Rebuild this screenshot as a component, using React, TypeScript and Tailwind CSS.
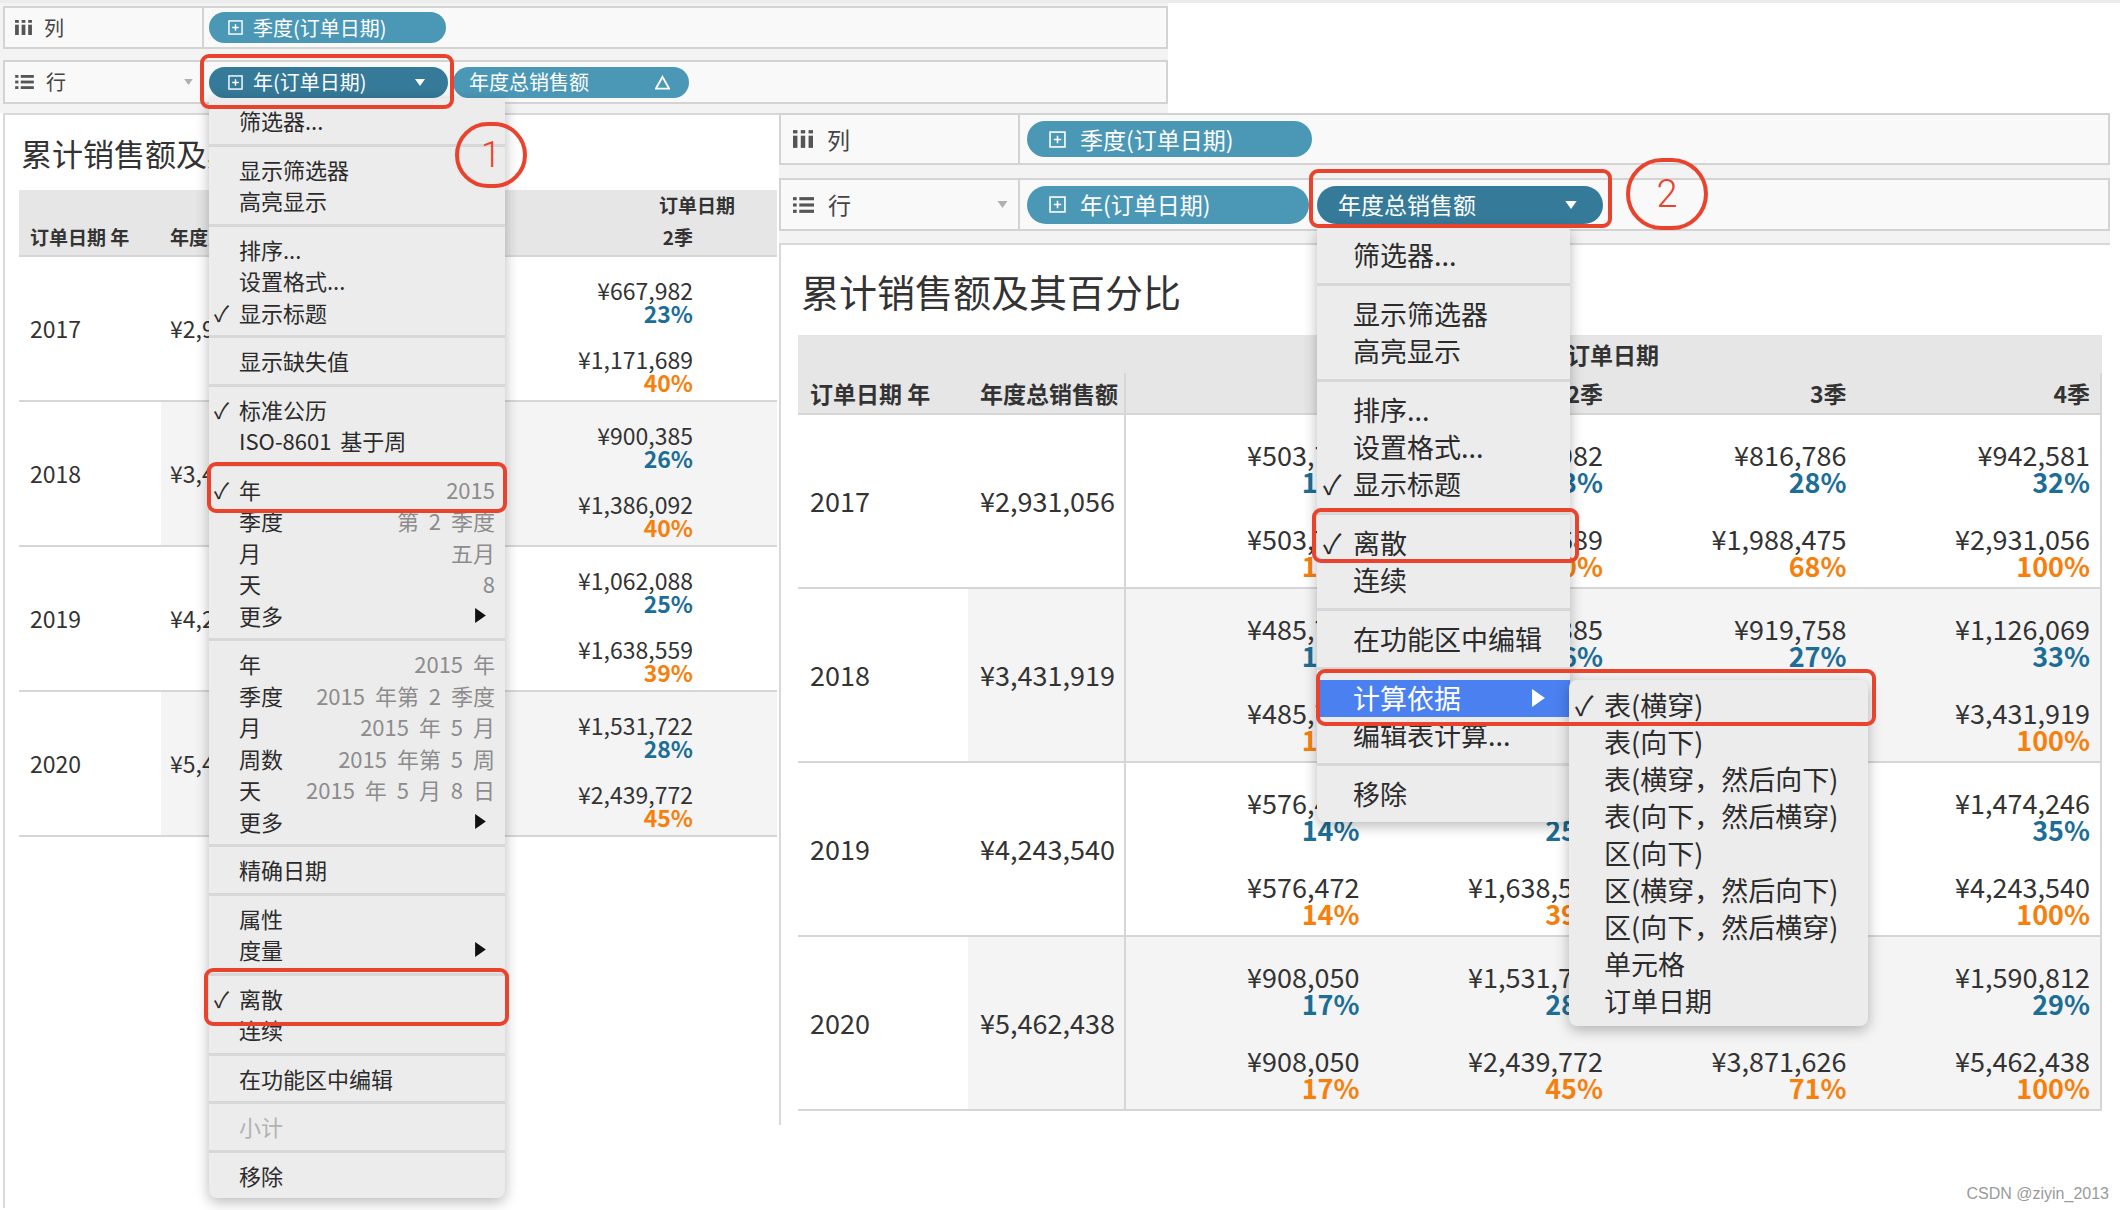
import React from "react";

const CJK = "font-['Noto_Sans_CJK_SC',sans-serif]";

type Item = {
  label: string;
  check?: boolean;
  value?: string;
  arrow?: boolean;
  disabled?: boolean;
  active?: boolean;
};

const menuOne: Item[][] = [
  [{ label: "筛选器..." }],
  [{ label: "显示筛选器" }, { label: "高亮显示" }],
  [{ label: "排序..." }, { label: "设置格式..." }, { label: "显示标题", check: true }],
  [{ label: "显示缺失值" }],
  [{ label: "标准公历", check: true }, { label: "ISO-8601 基于周" }],
  [
    { label: "年", check: true, value: "2015" },
    { label: "季度", value: "第 2 季度" },
    { label: "月", value: "五月" },
    { label: "天", value: "8" },
    { label: "更多", arrow: true },
  ],
  [
    { label: "年", value: "2015 年" },
    { label: "季度", value: "2015 年第 2 季度" },
    { label: "月", value: "2015 年 5 月" },
    { label: "周数", value: "2015 年第 5 周" },
    { label: "天", value: "2015 年 5 月 8 日" },
    { label: "更多", arrow: true },
  ],
  [{ label: "精确日期" }],
  [{ label: "属性" }, { label: "度量", arrow: true }],
  [{ label: "离散", check: true }, { label: "连续" }],
  [{ label: "在功能区中编辑" }],
  [{ label: "小计", disabled: true }],
  [{ label: "移除" }],
];

const menuTwo: Item[][] = [
  [{ label: "筛选器..." }],
  [{ label: "显示筛选器" }, { label: "高亮显示" }],
  [{ label: "排序..." }, { label: "设置格式..." }, { label: "显示标题", check: true }],
  [{ label: "离散", check: true }, { label: "连续" }],
  [{ label: "在功能区中编辑" }],
  [{ label: "计算依据", arrow: true, active: true }, { label: "编辑表计算..." }],
  [{ label: "移除" }],
];

const subMenu: Item[][] = [
  [
    { label: "表(横穿)", check: true },
    { label: "表(向下)" },
    { label: "表(横穿，然后向下)" },
    { label: "表(向下，然后横穿)" },
    { label: "区(向下)" },
    { label: "区(横穿，然后向下)" },
    { label: "区(向下，然后横穿)" },
    { label: "单元格" },
    { label: "订单日期" },
  ],
];

const rows = [
  {
    year: "2017",
    total: "¥2,931,056",
    cells: [
      ["¥503,707", "17%", "¥503,707", "17%"],
      ["¥667,982", "23%", "¥1,171,689", "40%"],
      ["¥816,786", "28%", "¥1,988,475", "68%"],
      ["¥942,581", "32%", "¥2,931,056", "100%"],
    ],
  },
  {
    year: "2018",
    total: "¥3,431,919",
    cells: [
      ["¥485,707", "14%", "¥485,707", "14%"],
      ["¥900,385", "26%", "¥1,386,092", "40%"],
      ["¥919,758", "27%", "¥2,305,850", "67%"],
      ["¥1,126,069", "33%", "¥3,431,919", "100%"],
    ],
  },
  {
    year: "2019",
    total: "¥4,243,540",
    cells: [
      ["¥576,472", "14%", "¥576,472", "14%"],
      ["¥1,062,088", "25%", "¥1,638,559", "39%"],
      ["¥1,130,735", "27%", "¥2,769,294", "65%"],
      ["¥1,474,246", "35%", "¥4,243,540", "100%"],
    ],
  },
  {
    year: "2020",
    total: "¥5,462,438",
    cells: [
      ["¥908,050", "17%", "¥908,050", "17%"],
      ["¥1,531,722", "28%", "¥2,439,772", "45%"],
      ["¥1,431,854", "26%", "¥3,871,626", "71%"],
      ["¥1,590,812", "29%", "¥5,462,438", "100%"],
    ],
  },
];

type TableCfg = {
  width: string;
  grid: string;
  data: string;
  quarters: number;
  headTop: string;
  headTopPos: string;
  headBot: string;
  headText: string;
  row: string;
  val: string;
  padL: string;
  padL2: string;
  padR: string;
  cell: string;
  line: string;
  gap: string;
};

// right sheet: all four quarters
const bigTable: TableCfg = {
  width: "w-[1304px]",
  grid: "grid-cols-[170px_156px_1fr]",
  data: "grid-cols-4 border-l-2 border-r-2",
  quarters: 4,
  headTop: "h-[38px]",
  headTopPos: "justify-center",
  headBot: "h-[40px]",
  headText: "text-[23px]",
  row: "h-[174px]",
  val: "text-[27px]",
  padL: "pl-[12px]",
  padL2: "pl-[12px]",
  padR: "pr-[10px]",
  cell: "pt-[26px] pr-[10px]",
  line: "text-[27px] leading-[27px]",
  gap: "mt-[30px]",
};

// left sheet: only the part left of the overlapping right sheet
const smallTable: TableCfg = {
  width: "w-[758px]",
  grid: "grid-cols-[142px_130px_1fr]",
  data: "grid-cols-[207px_207px_1fr] border-l-2",
  quarters: 2,
  headTop: "h-[30px]",
  headTopPos: "justify-end pr-[42px]",
  headBot: "h-[35px]",
  headText: "text-[19px]",
  row: "h-[145px]",
  val: "text-[23px]",
  padL: "pl-[11px]",
  padL2: "pl-[9px]",
  padR: "pr-[14px]",
  cell: "pt-[22px] pr-[14px]",
  line: "text-[23px] leading-[22.5px]",
  gap: "mt-[24px]",
};

function ColIcon({ className }: { className: string }) {
  return (
    <svg viewBox="0 0 18 16" className={className} fill="#555">
      <rect x="0" y="0" width="4" height="3" />
      <rect x="0" y="5" width="4" height="11" />
      <rect x="7" y="0" width="4" height="3" />
      <rect x="7" y="5" width="4" height="11" />
      <rect x="14" y="0" width="4" height="3" />
      <rect x="14" y="5" width="4" height="11" />
    </svg>
  );
}

function ListIcon({ className }: { className: string }) {
  return (
    <svg viewBox="0 0 20 15" className={className} fill="#555">
      <rect x="0" y="0" width="3.5" height="3" />
      <rect x="6" y="0" width="14" height="3" />
      <rect x="0" y="6" width="3.5" height="3" />
      <rect x="6" y="6" width="14" height="3" />
      <rect x="0" y="12" width="3.5" height="3" />
      <rect x="6" y="12" width="14" height="3" />
    </svg>
  );
}

function PlusBox({ className }: { className: string }) {
  return (
    <svg viewBox="0 0 16 16" className={className} fill="none" stroke="white" strokeWidth="1.5">
      <rect x="1" y="1" width="14" height="14" />
      <path d="M8 4.5v7M4.5 8h7" />
    </svg>
  );
}

function CaretDown({ className, color = "white" }: { className: string; color?: string }) {
  return (
    <svg viewBox="0 0 10 7" className={className}>
      <polygon points="0,0 10,0 5,7" fill={color} />
    </svg>
  );
}

function Delta({ className }: { className: string }) {
  return (
    <svg viewBox="0 0 16 16" className={className} fill="none" stroke="white" strokeWidth="2">
      <polygon points="8,2 15,14.5 1,14.5" />
    </svg>
  );
}

function ArrowRight({ className, color }: { className: string; color: string }) {
  return (
    <svg viewBox="0 0 10 14" className={className}>
      <polygon points="0,0 10,7 0,14" fill={color} />
    </svg>
  );
}

type MenuCfg = {
  box: string;
  text: string;
  item: string;
  sec: string;
  sep: string;
  pad: string;
  check: string;
  arrow: string;
};

function Menu({ sections, cfg }: { sections: Item[][]; cfg: MenuCfg }) {
  return (
    <div className={`absolute bg-[#ececec] shadow-[0_4px_14px_rgba(0,0,0,0.28)] text-[#2b2b2b] ${cfg.box} ${cfg.text}`}>
      {sections.map((sec, i) => (
        <div key={i}>
          {i > 0 && <div className={`bg-[#d7d7d7] ${cfg.sep}`} />}
          <div className={cfg.sec}>
            {sec.map((it, j) => (
              <div
                key={j}
                className={`relative flex items-center whitespace-nowrap ${cfg.item} ${cfg.pad} ${
                  it.active ? "bg-[#4a80f0] text-white" : ""
                } ${it.disabled ? "text-[#b2b2b2]" : ""}`}
              >
                {it.check && <span className={`absolute ${cfg.check}`}>✓</span>}
                <span className="[word-spacing:4px]">{it.label}</span>
                {it.value && <span className="ml-auto text-[#8c8c8c] [word-spacing:5px]">{it.value}</span>}
                {it.arrow && (
                  <ArrowRight className={`ml-auto ${cfg.arrow}`} color={it.active ? "white" : "#111"} />
                )}
              </div>
            ))}
          </div>
        </div>
      ))}
    </div>
  );
}

function Table({ c }: { c: TableCfg }) {
  const qs = ["1季", "2季", "3季", "4季"].slice(0, c.quarters);
  return (
    <div className={c.width}>
      <div className="bg-[#e6e6e6] border-b-2 border-[#d6d6d6] text-[#333]">
        <div className={`grid ${c.grid} ${c.headTop}`}>
          <div />
          <div />
          <div className={`flex items-center font-bold ${c.headText} ${c.headTopPos}`}>订单日期</div>
        </div>
        <div className={`grid ${c.grid} ${c.headBot}`}>
          <div className={`flex items-center font-bold whitespace-nowrap ${c.headText} ${c.padL}`}>订单日期 年</div>
          <div className={`flex items-center font-bold whitespace-nowrap ${c.headText} ${c.padL2}`}>年度总销售额</div>
          <div className={`grid border-[#d6d6d6] ${c.data}`}>
            {qs.map((q) => (
              <div key={q} className={`flex items-center justify-end font-bold ${c.headText} ${c.padR}`}>
                {q}
              </div>
            ))}
          </div>
        </div>
      </div>
      {rows.map((r, i) => (
        <div key={r.year} className={`grid ${c.grid} ${c.row} border-b-2 border-[#d6d6d6] text-[#333]`}>
          <div className={`flex items-center ${c.val} ${c.padL}`}>{r.year}</div>
          <div className={`flex items-center whitespace-nowrap ${c.val} ${c.padL2} ${i % 2 ? "bg-[#f4f4f4]" : ""}`}>
            {r.total}
          </div>
          <div className={`grid border-[#d6d6d6] ${c.data} ${i % 2 ? "bg-[#f4f4f4]" : ""}`}>
            {r.cells.slice(0, c.quarters).map((cell, j) => (
              <div key={j} className={`flex flex-col items-end whitespace-nowrap ${c.cell}`}>
                <span className={c.line}>{cell[0]}</span>
                <span className={`${c.line} font-bold text-[#1d6e96]`}>{cell[1]}</span>
                <span className={`${c.line} ${c.gap}`}>{cell[2]}</span>
                <span className={`${c.line} font-bold text-[#f7800d]`}>{cell[3]}</span>
              </div>
            ))}
          </div>
        </div>
      ))}
    </div>
  );
}

function RedBox({ className }: { className: string }) {
  return <div className={`absolute border-[4px] border-[#e9432d] rounded-[9px] ${className}`} />;
}

export default function App() {
  return (
    <div className={`relative w-[2120px] h-[1210px] overflow-hidden bg-white text-[#333] ${CJK}`}>
      <div className="h-[3px] bg-[#ebebeb]" />

      {/* left sheet */}
      <div className="w-[1168px] flex flex-col">
        <div className="bg-[#f3f3f3] pl-[3px] pt-[3px] pb-[9px]">
          <div className="h-[43px] flex border-2 border-[#d3d3d3] bg-[#f9f9f9]">
            <div className="w-[199px] flex items-center pl-[10px] gap-[12px] border-r-2 border-[#d3d3d3] text-[20px] text-[#444]">
              <ColIcon className="w-[17px] h-[15px]" />
              列
            </div>
            <div className="flex items-center pl-[5px]">
              <div className="w-[237px] h-[31px] rounded-full bg-[#4b98b6] text-white text-[20px] flex items-center pl-[19px] gap-[10px]">
                <PlusBox className="w-[15px] h-[15px]" />
                季度(订单日期)
              </div>
            </div>
          </div>
          <div className="h-[44px] mt-[11px] flex border-2 border-[#d3d3d3] bg-[#f9f9f9]">
            <div className="w-[199px] flex items-center pl-[10px] gap-[12px] border-r-2 border-[#d3d3d3] text-[20px] text-[#444]">
              <ListIcon className="w-[19px] h-[14px]" />
              行
              <CaretDown className="ml-auto mr-[9px] w-[9px] h-[6px]" color="#b0b0b0" />
            </div>
            <div className="flex items-center pl-[5px] gap-[5px]">
              <div className="w-[239px] h-[31px] rounded-full bg-[#357a98] text-white text-[20px] flex items-center pl-[19px] pr-[23px] gap-[10px]">
                <PlusBox className="w-[15px] h-[15px]" />
                年(订单日期)
                <CaretDown className="ml-auto w-[10px] h-[7px]" />
              </div>
              <div className="w-[236px] h-[31px] rounded-full bg-[#4b98b6] text-white text-[20px] flex items-center pl-[16px] pr-[19px]">
                年度总销售额
                <Delta className="ml-auto w-[15px] h-[15px]" />
              </div>
            </div>
          </div>
        </div>
        <div className="ml-[3px] h-[1095px] w-[776px] bg-white border-l-2 border-t-2 border-[#d9d9d9]">
          <div className="mt-[18px] pl-[16px] text-[31px] leading-[40px] whitespace-nowrap">累计销售额及其百分比</div>
          <div className="mt-[17px] ml-[14px]">
            <Table c={smallTable} />
          </div>
        </div>
      </div>

      {/* right sheet */}
      <div className="absolute left-[779px] top-[113px] w-[1331px] h-[1012px] flex flex-col bg-[#f3f3f3]">
        <div className="h-[52px] flex border-2 border-[#d3d3d3] bg-[#f9f9f9]">
          <div className="w-[239px] flex items-center pl-[12px] gap-[14px] border-r-2 border-[#d3d3d3] text-[23px] text-[#444]">
            <ColIcon className="w-[20px] h-[18px]" />
            列
          </div>
          <div className="flex items-center pl-[7px]">
            <div className="w-[285px] h-[36px] rounded-full bg-[#4b98b6] text-white text-[23px] flex items-center pl-[22px] gap-[14px]">
              <PlusBox className="w-[17px] h-[17px]" />
              季度(订单日期)
            </div>
          </div>
        </div>
        <div className="h-[53px] mt-[13px] flex border-2 border-[#d3d3d3] bg-[#f9f9f9]">
          <div className="w-[239px] flex items-center pl-[12px] gap-[14px] border-r-2 border-[#d3d3d3] text-[23px] text-[#444]">
            <ListIcon className="w-[21px] h-[16px]" />
            行
            <CaretDown className="ml-auto mr-[10px] w-[11px] h-[7px]" color="#b0b0b0" />
          </div>
          <div className="flex items-center pl-[7px] gap-[8px]">
            <div className="w-[282px] h-[38px] rounded-full bg-[#4b98b6] text-white text-[23px] flex items-center pl-[22px] gap-[14px]">
              <PlusBox className="w-[17px] h-[17px]" />
              年(订单日期)
            </div>
            <div className="w-[286px] h-[38px] rounded-full bg-[#357a98] text-white text-[23px] flex items-center pl-[21px] pr-[26px]">
              年度总销售额
              <CaretDown className="ml-auto w-[12px] h-[8px]" />
            </div>
          </div>
        </div>
        <div className="mt-[12px] flex-1 bg-white border-l-2 border-t-2 border-[#d9d9d9]">
          <div className="mt-[22px] pl-[20px] text-[38px] leading-[48px] whitespace-nowrap">累计销售额及其百分比</div>
          <div className="mt-[20px] ml-[17px]">
            <Table c={bigTable} />
          </div>
        </div>
      </div>

      {/* menus */}
      <Menu
        sections={menuOne}
        cfg={{
          box: "left-[209px] top-[98px] w-[296px] rounded-b-[8px]",
          text: "text-[22px]",
          item: "h-[31.5px]",
          sec: "py-[7px]",
          sep: "h-[3px]",
          pad: "pl-[30px] pr-[10px]",
          check: "left-[5px]",
          arrow: "mr-[8px] w-[13px] h-[15px]",
        }}
      />
      <Menu
        sections={menuTwo}
        cfg={{
          box: "left-[1317px] top-[227px] w-[253px] rounded-b-[8px]",
          text: "text-[27px]",
          item: "h-[37px]",
          sec: "py-[9.5px]",
          sep: "h-[3px]",
          pad: "pl-[36px] pr-[24px]",
          check: "left-[6px]",
          arrow: "w-[15px] h-[18px]",
        }}
      />
      <Menu
        sections={subMenu}
        cfg={{
          box: "left-[1569px] top-[680px] w-[299px] rounded-[8px]",
          text: "text-[27px]",
          item: "h-[37px]",
          sec: "py-[6.5px]",
          sep: "h-[3px]",
          pad: "pl-[35px] pr-[10px]",
          check: "left-[6px]",
          arrow: "w-[15px] h-[18px]",
        }}
      />

      {/* annotations */}
      <RedBox className="left-[200px] top-[54px] w-[254px] h-[55px]" />
      <RedBox className="left-[207px] top-[462px] w-[300px] h-[51px]" />
      <RedBox className="left-[204px] top-[968px] w-[305px] h-[58px]" />
      <RedBox className="left-[1309px] top-[169px] w-[303px] h-[59px]" />
      <RedBox className="left-[1312px] top-[508px] w-[267px] h-[55px]" />
      <RedBox className="left-[1316px] top-[669px] w-[560px] h-[57px]" />

      <div className="absolute left-[455px] top-[122px] w-[72px] h-[66px] rounded-full border-[4px] border-[#e9432d] flex items-center justify-center text-[#e9432d] text-[36px] font-light font-['Roboto',sans-serif]">
        1
      </div>
      <div className="absolute left-[1626px] top-[158px] w-[82px] h-[72px] rounded-full border-[4px] border-[#e9432d] flex items-center justify-center text-[#e9432d] text-[38px] font-light font-['Roboto',sans-serif]">
        2
      </div>

      <div className="absolute right-[11px] top-[1182px] text-[16px] text-[#9a9a9a] font-['Liberation_Sans',sans-serif]">
        CSDN @ziyin_2013
      </div>
    </div>
  );
}
